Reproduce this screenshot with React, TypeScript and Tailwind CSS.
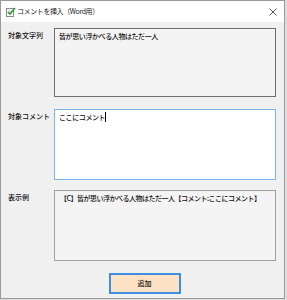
import React from 'react';

const font = { fontFamily: '"Noto Sans CJK JP", "Noto Sans", sans-serif' };

function TitleIcon() {
  return (
    <svg width="11" height="11" viewBox="0 0 11 11" className="shrink-0">
      <rect x="1.5" y="2.5" width="7" height="8" fill="#fff" stroke="#8a8a8a" />
      <path d="M3 5h4M3 7h4" stroke="#bbb" strokeWidth="0.8" />
      <path d="M3 6l2 2 5-6" stroke="#2e9b2e" strokeWidth="1.6" fill="none" />
    </svg>
  );
}

function Row({ label, children, className }: { label: string; children: React.ReactNode; className?: string }) {
  return (
    <div className={`flex ${className ?? ''}`}>
      <div className="w-[53px] pl-[7px] pt-[1px] text-[7px] leading-[12px] text-[#111] font-medium">{label}</div>
      {children}
    </div>
  );
}

export default function App() {
  const target = '皆が思い浮かべる人物はただ一人';
  const comment = 'ここにコメント';

  return (
    <div className="w-[287px] h-[300px] bg-[#dcdcdc]" style={font}>
      <div className="w-[285px] h-[299px] border border-[#9a9a9a] bg-[#f0f0f0] flex flex-col">
        {/* タイトルバー */}
        <div className="h-[21px] bg-white flex items-center pl-[4px] pr-[6px] gap-[1px]">
          <TitleIcon />
          <span className="text-[7px] text-[#222] tracking-[-0.4px]">コメントを挿入（Word用）</span>
          <svg width="8" height="8" viewBox="0 0 8 8" className="ml-auto mr-[1px]">
            <path d="M0.5 0.5l7 7M7.5 0.5l-7 7" stroke="#444" strokeWidth="0.9" />
          </svg>
        </div>

        <div className="flex flex-col pt-[6px]">
          {/* 対象文字列 */}
          <Row label="対象文字列">
            <div className="w-[222px] h-[69px] border border-[#6e6e6e] bg-[#f4f4f4] px-[4px] py-[1px] text-[7px] leading-[12px] text-[#111] font-medium tracking-[-0.4px]">
              {target}
            </div>
          </Row>

          {/* 対象コメント */}
          <Row label="対象コメント" className="mt-[12px]">
            <div className="w-[222px] h-[71px] border border-[#7eb4ea] bg-white px-[4px] py-[1px] text-[7px] leading-[12px] text-[#111] font-medium tracking-[-0.4px] flex items-start">
              <span>{comment}</span>
              <span className="inline-block w-[1px] h-[10px] mt-[1px] bg-black" />
            </div>
          </Row>

          {/* 表示例 */}
          <Row label="表示例" className="mt-[10px]">
            <div className="w-[222px] h-[71px] border border-[#a0a0a0] bg-[#f4f4f4] px-[5px] py-[1px] text-[7px] leading-[12px] text-[#111] font-medium tracking-[-0.5px]">
              【C】{target}【コメント:{comment}】
            </div>
          </Row>

          <div className="flex justify-center mt-[12px] pl-[4px]">
            <button className="w-[72px] h-[21px] border-2 border-[#3d8ee0] bg-[#fde1c4] text-[7px] text-[#111] font-medium">
              追加
            </button>
          </div>
        </div>
      </div>
    </div>
  );
}
